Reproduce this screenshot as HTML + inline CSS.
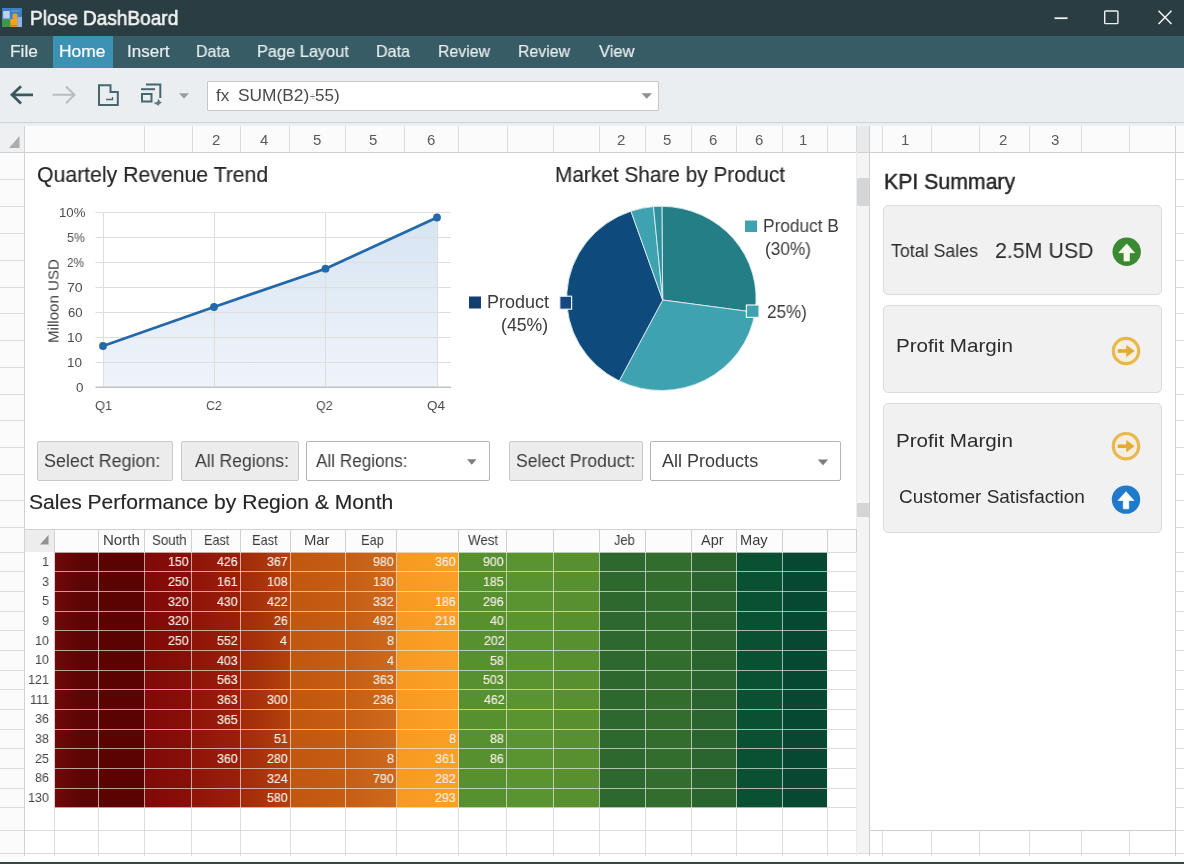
<!DOCTYPE html>
<html><head><meta charset="utf-8"><title>Plose DashBoard</title>
<style>
html,body{margin:0;padding:0;}
body{width:1184px;height:864px;overflow:hidden;background:#fff;position:relative;font-family:"Liberation Sans",sans-serif;}
.b{position:absolute;display:block;}
.t{will-change:transform;position:absolute;white-space:nowrap;transform-origin:0 0;}
</style></head><body>
<div class="b" style="left:0px;top:126px;width:24.5px;height:738px;background:#fbfbfb;"></div>
<div class="b" style="left:0px;top:123.5px;width:1184px;height:2.5px;background:#eef0f2;"></div>
<div class="b" style="left:0px;top:126px;width:1184px;height:26px;background:#fbfbfb;"></div>
<div class="b" style="left:0px;top:126px;width:24.5px;height:26px;background:#eef0f1;"></div>
<div class="b" style="left:0px;top:151.9px;width:24.5px;height:1.2px;background:#dadcde;"></div>
<div class="b" style="left:1175px;top:151.9px;width:9px;height:1.2px;background:#dadcde;"></div>
<div class="b" style="left:0px;top:178.9px;width:24.5px;height:1.2px;background:#dadcde;"></div>
<div class="b" style="left:1175px;top:178.9px;width:9px;height:1.2px;background:#dadcde;"></div>
<div class="b" style="left:0px;top:205.9px;width:24.5px;height:1.2px;background:#dadcde;"></div>
<div class="b" style="left:1175px;top:205.9px;width:9px;height:1.2px;background:#dadcde;"></div>
<div class="b" style="left:0px;top:232.9px;width:24.5px;height:1.2px;background:#dadcde;"></div>
<div class="b" style="left:1175px;top:232.9px;width:9px;height:1.2px;background:#dadcde;"></div>
<div class="b" style="left:0px;top:259.9px;width:24.5px;height:1.2px;background:#dadcde;"></div>
<div class="b" style="left:1175px;top:259.9px;width:9px;height:1.2px;background:#dadcde;"></div>
<div class="b" style="left:0px;top:286.9px;width:24.5px;height:1.2px;background:#dadcde;"></div>
<div class="b" style="left:1175px;top:286.9px;width:9px;height:1.2px;background:#dadcde;"></div>
<div class="b" style="left:0px;top:312.9px;width:24.5px;height:1.2px;background:#dadcde;"></div>
<div class="b" style="left:1175px;top:312.9px;width:9px;height:1.2px;background:#dadcde;"></div>
<div class="b" style="left:0px;top:339.9px;width:24.5px;height:1.2px;background:#dadcde;"></div>
<div class="b" style="left:1175px;top:339.9px;width:9px;height:1.2px;background:#dadcde;"></div>
<div class="b" style="left:0px;top:366.9px;width:24.5px;height:1.2px;background:#dadcde;"></div>
<div class="b" style="left:1175px;top:366.9px;width:9px;height:1.2px;background:#dadcde;"></div>
<div class="b" style="left:0px;top:393.9px;width:24.5px;height:1.2px;background:#dadcde;"></div>
<div class="b" style="left:1175px;top:393.9px;width:9px;height:1.2px;background:#dadcde;"></div>
<div class="b" style="left:0px;top:419.9px;width:24.5px;height:1.2px;background:#dadcde;"></div>
<div class="b" style="left:1175px;top:419.9px;width:9px;height:1.2px;background:#dadcde;"></div>
<div class="b" style="left:0px;top:446.9px;width:24.5px;height:1.2px;background:#dadcde;"></div>
<div class="b" style="left:1175px;top:446.9px;width:9px;height:1.2px;background:#dadcde;"></div>
<div class="b" style="left:0px;top:473.9px;width:24.5px;height:1.2px;background:#dadcde;"></div>
<div class="b" style="left:1175px;top:473.9px;width:9px;height:1.2px;background:#dadcde;"></div>
<div class="b" style="left:0px;top:499.9px;width:24.5px;height:1.2px;background:#dadcde;"></div>
<div class="b" style="left:1175px;top:499.9px;width:9px;height:1.2px;background:#dadcde;"></div>
<div class="b" style="left:0px;top:526.9px;width:24.5px;height:1.2px;background:#dadcde;"></div>
<div class="b" style="left:1175px;top:526.9px;width:9px;height:1.2px;background:#dadcde;"></div>
<div class="b" style="left:0px;top:551.9px;width:24.5px;height:1.2px;background:#dadcde;"></div>
<div class="b" style="left:1175px;top:551.9px;width:9px;height:1.2px;background:#dadcde;"></div>
<div class="b" style="left:0px;top:570.9px;width:24.5px;height:1.2px;background:#dadcde;"></div>
<div class="b" style="left:1175px;top:570.9px;width:9px;height:1.2px;background:#dadcde;"></div>
<div class="b" style="left:0px;top:590.9px;width:24.5px;height:1.2px;background:#dadcde;"></div>
<div class="b" style="left:1175px;top:590.9px;width:9px;height:1.2px;background:#dadcde;"></div>
<div class="b" style="left:0px;top:610.9px;width:24.5px;height:1.2px;background:#dadcde;"></div>
<div class="b" style="left:1175px;top:610.9px;width:9px;height:1.2px;background:#dadcde;"></div>
<div class="b" style="left:0px;top:629.9px;width:24.5px;height:1.2px;background:#dadcde;"></div>
<div class="b" style="left:1175px;top:629.9px;width:9px;height:1.2px;background:#dadcde;"></div>
<div class="b" style="left:0px;top:649.9px;width:24.5px;height:1.2px;background:#dadcde;"></div>
<div class="b" style="left:1175px;top:649.9px;width:9px;height:1.2px;background:#dadcde;"></div>
<div class="b" style="left:0px;top:669.9px;width:24.5px;height:1.2px;background:#dadcde;"></div>
<div class="b" style="left:1175px;top:669.9px;width:9px;height:1.2px;background:#dadcde;"></div>
<div class="b" style="left:0px;top:688.9px;width:24.5px;height:1.2px;background:#dadcde;"></div>
<div class="b" style="left:1175px;top:688.9px;width:9px;height:1.2px;background:#dadcde;"></div>
<div class="b" style="left:0px;top:708.9px;width:24.5px;height:1.2px;background:#dadcde;"></div>
<div class="b" style="left:1175px;top:708.9px;width:9px;height:1.2px;background:#dadcde;"></div>
<div class="b" style="left:0px;top:728.9px;width:24.5px;height:1.2px;background:#dadcde;"></div>
<div class="b" style="left:1175px;top:728.9px;width:9px;height:1.2px;background:#dadcde;"></div>
<div class="b" style="left:0px;top:747.9px;width:24.5px;height:1.2px;background:#dadcde;"></div>
<div class="b" style="left:1175px;top:747.9px;width:9px;height:1.2px;background:#dadcde;"></div>
<div class="b" style="left:0px;top:767.9px;width:24.5px;height:1.2px;background:#dadcde;"></div>
<div class="b" style="left:1175px;top:767.9px;width:9px;height:1.2px;background:#dadcde;"></div>
<div class="b" style="left:0px;top:787.9px;width:24.5px;height:1.2px;background:#dadcde;"></div>
<div class="b" style="left:1175px;top:787.9px;width:9px;height:1.2px;background:#dadcde;"></div>
<div class="b" style="left:0px;top:806.9px;width:24.5px;height:1.2px;background:#dadcde;"></div>
<div class="b" style="left:1175px;top:806.9px;width:9px;height:1.2px;background:#dadcde;"></div>
<div class="b" style="left:0px;top:829.9px;width:24.5px;height:1.2px;background:#dadcde;"></div>
<div class="b" style="left:1175px;top:829.9px;width:9px;height:1.2px;background:#dadcde;"></div>
<div class="b" style="left:0px;top:852.9px;width:24.5px;height:1.2px;background:#dadcde;"></div>
<div class="b" style="left:1175px;top:852.9px;width:9px;height:1.2px;background:#dadcde;"></div>
<div class="b" style="left:0px;top:829.9px;width:1184px;height:1.2px;background:#dadcde;"></div>
<div class="b" style="left:0px;top:852.9px;width:1184px;height:1.2px;background:#dadcde;"></div>
<div class="b" style="left:23.9px;top:126px;width:1.2px;height:26px;background:#dadcde;"></div>
<div class="b" style="left:143.9px;top:126px;width:1.2px;height:26px;background:#dadcde;"></div>
<div class="b" style="left:191.9px;top:126px;width:1.2px;height:26px;background:#dadcde;"></div>
<div class="b" style="left:239.9px;top:126px;width:1.2px;height:26px;background:#dadcde;"></div>
<div class="b" style="left:288.9px;top:126px;width:1.2px;height:26px;background:#dadcde;"></div>
<div class="b" style="left:344.9px;top:126px;width:1.2px;height:26px;background:#dadcde;"></div>
<div class="b" style="left:403.9px;top:126px;width:1.2px;height:26px;background:#dadcde;"></div>
<div class="b" style="left:457.9px;top:126px;width:1.2px;height:26px;background:#dadcde;"></div>
<div class="b" style="left:506.9px;top:126px;width:1.2px;height:26px;background:#dadcde;"></div>
<div class="b" style="left:552.9px;top:126px;width:1.2px;height:26px;background:#dadcde;"></div>
<div class="b" style="left:598.9px;top:126px;width:1.2px;height:26px;background:#dadcde;"></div>
<div class="b" style="left:644.9px;top:126px;width:1.2px;height:26px;background:#dadcde;"></div>
<div class="b" style="left:690.9px;top:126px;width:1.2px;height:26px;background:#dadcde;"></div>
<div class="b" style="left:735.9px;top:126px;width:1.2px;height:26px;background:#dadcde;"></div>
<div class="b" style="left:781.9px;top:126px;width:1.2px;height:26px;background:#dadcde;"></div>
<div class="b" style="left:826.9px;top:126px;width:1.2px;height:26px;background:#dadcde;"></div>
<div class="b" style="left:855.9px;top:126px;width:1.2px;height:26px;background:#dadcde;"></div>
<div class="b" style="left:868.9px;top:126px;width:1.2px;height:26px;background:#dadcde;"></div>
<div class="b" style="left:881.9px;top:126px;width:1.2px;height:26px;background:#dadcde;"></div>
<div class="b" style="left:930.9px;top:126px;width:1.2px;height:26px;background:#dadcde;"></div>
<div class="b" style="left:978.9px;top:126px;width:1.2px;height:26px;background:#dadcde;"></div>
<div class="b" style="left:1028.9px;top:126px;width:1.2px;height:26px;background:#dadcde;"></div>
<div class="b" style="left:1080.9px;top:126px;width:1.2px;height:26px;background:#dadcde;"></div>
<div class="b" style="left:1128.9px;top:126px;width:1.2px;height:26px;background:#dadcde;"></div>
<div class="b" style="left:1174.9px;top:126px;width:1.2px;height:26px;background:#dadcde;"></div>
<div class="b" style="left:53.9px;top:808px;width:1.2px;height:48px;background:#dadcde;"></div>
<div class="b" style="left:97.9px;top:808px;width:1.2px;height:48px;background:#dadcde;"></div>
<div class="b" style="left:143.9px;top:808px;width:1.2px;height:48px;background:#dadcde;"></div>
<div class="b" style="left:190.9px;top:808px;width:1.2px;height:48px;background:#dadcde;"></div>
<div class="b" style="left:239.9px;top:808px;width:1.2px;height:48px;background:#dadcde;"></div>
<div class="b" style="left:289.9px;top:808px;width:1.2px;height:48px;background:#dadcde;"></div>
<div class="b" style="left:344.9px;top:808px;width:1.2px;height:48px;background:#dadcde;"></div>
<div class="b" style="left:395.9px;top:808px;width:1.2px;height:48px;background:#dadcde;"></div>
<div class="b" style="left:457.9px;top:808px;width:1.2px;height:48px;background:#dadcde;"></div>
<div class="b" style="left:505.9px;top:808px;width:1.2px;height:48px;background:#dadcde;"></div>
<div class="b" style="left:552.9px;top:808px;width:1.2px;height:48px;background:#dadcde;"></div>
<div class="b" style="left:598.9px;top:808px;width:1.2px;height:48px;background:#dadcde;"></div>
<div class="b" style="left:644.9px;top:808px;width:1.2px;height:48px;background:#dadcde;"></div>
<div class="b" style="left:690.9px;top:808px;width:1.2px;height:48px;background:#dadcde;"></div>
<div class="b" style="left:735.9px;top:808px;width:1.2px;height:48px;background:#dadcde;"></div>
<div class="b" style="left:781.9px;top:808px;width:1.2px;height:48px;background:#dadcde;"></div>
<div class="b" style="left:826.9px;top:808px;width:1.2px;height:48px;background:#dadcde;"></div>
<div class="b" style="left:855.9px;top:808px;width:1.2px;height:48px;background:#dadcde;"></div>
<div class="b" style="left:868.9px;top:808px;width:1.2px;height:48px;background:#dadcde;"></div>
<div class="b" style="left:881.9px;top:808px;width:1.2px;height:48px;background:#dadcde;"></div>
<div class="b" style="left:930.9px;top:808px;width:1.2px;height:48px;background:#dadcde;"></div>
<div class="b" style="left:978.9px;top:808px;width:1.2px;height:48px;background:#dadcde;"></div>
<div class="b" style="left:1028.9px;top:808px;width:1.2px;height:48px;background:#dadcde;"></div>
<div class="b" style="left:1080.9px;top:808px;width:1.2px;height:48px;background:#dadcde;"></div>
<div class="b" style="left:1128.9px;top:808px;width:1.2px;height:48px;background:#dadcde;"></div>
<div class="b" style="left:1174.9px;top:808px;width:1.2px;height:48px;background:#dadcde;"></div>
<div class="b" style="left:24.5px;top:152px;width:831.5px;height:656px;background:#fff;"></div>
<div class="b" style="left:869.5px;top:152px;width:305.5px;height:678.5px;background:#fff;"></div>
<div class="b" style="left:0px;top:151.8px;width:1184px;height:1.4px;background:#d0d0d0;"></div>
<div class="b" style="left:23.8px;top:126px;width:1.4px;height:730px;background:#d2d2d2;"></div>
<div class="b" style="left:1174.8px;top:126px;width:1.4px;height:730px;background:#d2d2d2;"></div>
<div class="b" style="left:856px;top:126px;width:13.5px;height:26px;background:#e8e9ea;"></div>
<div class="b" style="left:856px;top:152.7px;width:13.5px;height:700px;background:#f4f4f4;"></div>
<div class="b" style="left:855.9px;top:126px;width:1.2px;height:26px;background:#d9dbdd;"></div>
<div class="b" style="left:856.0px;top:152px;width:1px;height:704px;background:#ececec;"></div>
<div class="b" style="left:868.8px;top:126px;width:1.4px;height:730px;background:#cfcfcf;"></div>
<div class="b" style="left:857px;top:178px;width:12px;height:27.5px;background:#d3d5d7;"></div>
<div class="b" style="left:857px;top:502.5px;width:12px;height:14px;background:#d3d5d7;"></div>
<div class="b" style="left:869.5px;top:829.8px;width:305.5px;height:1.4px;background:#cfcfcf;"></div>
<div class="b" style="left:0px;top:0px;width:1184px;height:36px;background:#293d42;"></div>
<svg class="b" style="left:2px;top:7.5px" width="20" height="19.5" viewBox="0 0 20 19.5">
<rect x="0" y="0" width="20" height="19.5" rx="1.5" fill="#6f9fd2"/>
<rect x="0" y="0" width="20" height="11.5" fill="#3f7fc4"/>
<rect x="0" y="11.5" width="8.5" height="8" fill="#3b9848"/>
<rect x="8.5" y="11" width="7" height="8" fill="#f3a21c"/>
<rect x="10.5" y="5.5" width="5" height="6.5" rx="2" fill="#f0a020"/>
<rect x="15.5" y="9" width="4.5" height="10.5" fill="#8db4e2"/>
<rect x="1.2" y="3" width="6.5" height="7.5" fill="#d5e2f2" opacity=".85"/>
<rect x="9" y="17" width="6" height="1.5" fill="#e96a3a"/>
<rect x="9.5" y="2" width="8" height="2" fill="#5a92d0"/>
</svg>
<span class="t" style="left:29.98px;top:6px;font-size:20.5px;line-height:23px;color:#f3f3f3;transform:scaleX(0.9290);-webkit-text-stroke:0.6px #f3f3f3;">Plose DashBoard</span>
<svg class="b" style="left:1040px;top:0" width="144" height="36" viewBox="0 0 144 36">
<path d="M14.5 18.2H27.5" stroke="#f0f0f0" stroke-width="1.8" fill="none"/>
<rect x="64.7" y="11" width="13.2" height="12.6" rx="0.8" stroke="#f0f0f0" stroke-width="1.4" fill="none"/>
<path d="M118.5 10.8L131.5 24M131.5 10.8L118.5 24" stroke="#f0f0f0" stroke-width="1.6" fill="none"/>
</svg>
<div class="b" style="left:0px;top:36px;width:1184px;height:32px;background:#385c65;"></div>
<div class="b" style="left:52.5px;top:36px;width:60.5px;height:32px;background:#3d92b4;"></div>
<span class="t" style="left:9.87px;top:42px;font-size:17px;line-height:19px;color:#e6eef0;transform:scaleX(1.0166);-webkit-text-stroke:0.2px #e6eef0;">File</span>
<span class="t" style="left:59.36px;top:42px;font-size:17px;line-height:19px;color:#fff;transform:scaleX(1.0228);-webkit-text-stroke:0.2px #fff;">Home</span>
<span class="t" style="left:127.49px;top:42px;font-size:17px;line-height:19px;color:#e6eef0;transform:scaleX(0.9885);-webkit-text-stroke:0.2px #e6eef0;">Insert</span>
<span class="t" style="left:196.22px;top:42px;font-size:17px;line-height:19px;color:#e6eef0;transform:scaleX(0.9394);-webkit-text-stroke:0.2px #e6eef0;">Data</span>
<span class="t" style="left:257.44px;top:42px;font-size:17px;line-height:19px;color:#e6eef0;transform:scaleX(0.9618);-webkit-text-stroke:0.2px #e6eef0;">Page Layout</span>
<span class="t" style="left:376.46px;top:42px;font-size:17px;line-height:19px;color:#e6eef0;transform:scaleX(0.9467);-webkit-text-stroke:0.2px #e6eef0;">Data</span>
<span class="t" style="left:438.48px;top:42px;font-size:17px;line-height:19px;color:#e6eef0;transform:scaleX(0.9329);-webkit-text-stroke:0.2px #e6eef0;">Review</span>
<span class="t" style="left:518.48px;top:42px;font-size:17px;line-height:19px;color:#e6eef0;transform:scaleX(0.9329);-webkit-text-stroke:0.2px #e6eef0;">Review</span>
<span class="t" style="left:599.00px;top:42px;font-size:17px;line-height:19px;color:#e6eef0;transform:scaleX(0.9713);-webkit-text-stroke:0.2px #e6eef0;">View</span>
<div class="b" style="left:0px;top:68px;width:1184px;height:55.5px;background:#ebeef1;"></div>
<div class="b" style="left:0px;top:121.7px;width:1184px;height:1.6px;background:#cdd2d6;"></div>
<div class="b" style="left:207px;top:80.5px;width:452px;height:30px;background:#fff;border:1px solid #c3c7ca;box-sizing:border-box;border-radius:1px;"></div>
<span class="t" style="left:216.33px;top:86px;font-size:17px;line-height:19px;color:#4a4a4a;transform:scaleX(1.0062);">fx</span>
<span class="t" style="left:237.72px;top:86px;font-size:17px;line-height:19px;color:#4a4a4a;transform:scaleX(1.0195);">SUM(B2)</span>
<span class="t" style="left:309.72px;top:90px;font-size:11px;line-height:12px;color:#777;transform:scaleX(0.8349);">÷</span>
<span class="t" style="left:314.82px;top:86px;font-size:17px;line-height:19px;color:#4a4a4a;transform:scaleX(1.0059);">55)</span>
<svg class="b" style="left:0;top:68px" width="700" height="55" viewBox="0 68 700 55">
<path d="M33 94.8H12M21 86.2L12 94.8L21 103.4" stroke="#3b5a60" stroke-width="2.8" fill="none" stroke-linecap="butt" stroke-linejoin="miter"/>
<path d="M52.5 94.8H74M66 86.5L74.5 94.8L66 103.2" stroke="#b9bdc1" stroke-width="2" fill="none"/>
<path d="M99 85.3H110.5V92H117.8V105H99Z" stroke="#47666e" stroke-width="2" fill="none" stroke-linejoin="miter"/>
<path d="M106 99.5H112.5V97" stroke="#47666e" stroke-width="1.3" fill="none"/>
<path d="M146 84.5H160.3V98" stroke="#47666e" stroke-width="2" fill="none"/>
<path d="M141 89.2H155" stroke="#47666e" stroke-width="2" fill="none"/>
<rect x="142" y="94" width="9.5" height="7.5" stroke="#47666e" stroke-width="2" fill="none"/>
<path d="M153.5 103L157 102L158.5 98.8L160 101.5L162 102.5L159.5 104L158.5 105.8L156.5 104.5Z" fill="#5d7a82"/>
<path d="M179 93.2H189L184 98.8Z" fill="#9a9ea2"/>
<path d="M641.5 93.2H652L646.7 98.8Z" fill="#8d9194"/>
</svg>
<svg class="b" style="left:9px;top:135.5px" width="11" height="12.5" viewBox="0 0 11 12.5"><path d="M10.5 0V12H0Z" fill="#a9adb0"/></svg>
<span class="t" style="left:211.50px;top:131px;font-size:15px;line-height:17px;color:#5a5a5a;transform:scaleX(1.0000);">2</span>
<span class="t" style="left:260.18px;top:131px;font-size:15px;line-height:17px;color:#5a5a5a;transform:scaleX(1.0000);">4</span>
<span class="t" style="left:313.14px;top:131px;font-size:15px;line-height:17px;color:#5a5a5a;transform:scaleX(1.0000);">5</span>
<span class="t" style="left:368.84px;top:131px;font-size:15px;line-height:17px;color:#5a5a5a;transform:scaleX(1.0000);">5</span>
<span class="t" style="left:426.56px;top:131px;font-size:15px;line-height:17px;color:#5a5a5a;transform:scaleX(1.0000);">6</span>
<span class="t" style="left:617.30px;top:131px;font-size:15px;line-height:17px;color:#5a5a5a;transform:scaleX(1.0000);">2</span>
<span class="t" style="left:663.34px;top:131px;font-size:15px;line-height:17px;color:#5a5a5a;transform:scaleX(1.0000);">5</span>
<span class="t" style="left:709.26px;top:131px;font-size:15px;line-height:17px;color:#5a5a5a;transform:scaleX(1.0000);">6</span>
<span class="t" style="left:754.76px;top:131px;font-size:15px;line-height:17px;color:#5a5a5a;transform:scaleX(1.0000);">6</span>
<span class="t" style="left:799.11px;top:131px;font-size:15px;line-height:17px;color:#5a5a5a;transform:scaleX(1.0000);">1</span>
<span class="t" style="left:900.91px;top:131px;font-size:15px;line-height:17px;color:#5a5a5a;transform:scaleX(1.0000);">1</span>
<span class="t" style="left:999.30px;top:131px;font-size:15px;line-height:17px;color:#5a5a5a;transform:scaleX(1.0000);">2</span>
<span class="t" style="left:1051.17px;top:131px;font-size:15px;line-height:17px;color:#5a5a5a;transform:scaleX(1.0000);">3</span>
<span class="t" style="left:36.54px;top:163px;font-size:21.5px;line-height:24px;color:#262626;transform:scaleX(0.9871);-webkit-text-stroke:0.15px #262626;">Quartely Revenue Trend</span>
<span class="t" style="left:554.84px;top:163px;font-size:21.5px;line-height:24px;color:#262626;transform:scaleX(0.9679);-webkit-text-stroke:0.15px #262626;">Market Share by Product</span>
<span class="t" style="left:29.05px;top:490px;font-size:20.5px;line-height:23px;color:#262626;transform:scaleX(1.0279);-webkit-text-stroke:0.15px #262626;">Sales Performance by Region &amp; Month</span>
<span class="t" style="left:883.80px;top:169px;font-size:22px;line-height:25px;color:#262626;transform:scaleX(0.9666);-webkit-text-stroke:0.45px #262626;">KPI Summary</span>
<svg class="b" style="left:0;top:152px" width="560" height="290" viewBox="0 152 560 290"><defs><linearGradient id="ag" x1="0" y1="0" x2="0" y2="1"><stop offset="0" stop-color="#cfdff0" stop-opacity=".85"/><stop offset="1" stop-color="#e9f0f8" stop-opacity=".75"/></linearGradient></defs><path d="M103 346L214 307L325.5 268.7L437 217.5V387H103Z" fill="url(#ag)"/><path d="M95.5 212.5H451" stroke="#dedede" stroke-width="1.1"/><path d="M95.5 237.5H451" stroke="#dedede" stroke-width="1.1"/><path d="M95.5 262.5H451" stroke="#dedede" stroke-width="1.1"/><path d="M95.5 287.5H451" stroke="#dedede" stroke-width="1.1"/><path d="M95.5 312.5H451" stroke="#dedede" stroke-width="1.1"/><path d="M95.5 337.5H451" stroke="#dedede" stroke-width="1.1"/><path d="M95.5 362.5H451" stroke="#dedede" stroke-width="1.1"/><path d="M103.5 212V387" stroke="#dedede" stroke-width="1.1"/><path d="M214.5 212V387" stroke="#dedede" stroke-width="1.1"/><path d="M325.5 212V387" stroke="#dedede" stroke-width="1.1"/><path d="M437.5 212V387" stroke="#dedede" stroke-width="1.1"/><path d="M95.5 387.3H451" stroke="#c2c2c2" stroke-width="1.6"/><path d="M103 346L214 307L325.5 268.7L437 217.5" stroke="#2368a8" stroke-width="2.8" fill="none" stroke-linejoin="round"/><circle cx="103" cy="346" r="3.9" fill="#2368a8"/><circle cx="214" cy="307" r="3.9" fill="#2368a8"/><circle cx="325.5" cy="268.7" r="3.9" fill="#2368a8"/><circle cx="437" cy="217.5" r="3.9" fill="#2368a8"/></svg>
<span class="t" style="left:59.01px;top:205px;font-size:13px;line-height:15px;color:#4d4d4d;transform:scaleX(1.0175);">10%</span>
<span class="t" style="left:67.00px;top:230px;font-size:13px;line-height:15px;color:#4d4d4d;transform:scaleX(0.9545);">5%</span>
<span class="t" style="left:67.41px;top:255px;font-size:13px;line-height:15px;color:#4d4d4d;transform:scaleX(0.9050);">2%</span>
<span class="t" style="left:67.29px;top:280px;font-size:13px;line-height:15px;color:#4d4d4d;transform:scaleX(1.0882);">70</span>
<span class="t" style="left:68.04px;top:305px;font-size:13px;line-height:15px;color:#4d4d4d;transform:scaleX(1.0131);">60</span>
<span class="t" style="left:67.17px;top:330px;font-size:13px;line-height:15px;color:#4d4d4d;transform:scaleX(1.0615);">10</span>
<span class="t" style="left:67.49px;top:355px;font-size:13px;line-height:15px;color:#4d4d4d;transform:scaleX(1.0385);">10</span>
<span class="t" style="left:75.53px;top:380px;font-size:13px;line-height:15px;color:#4d4d4d;transform:scaleX(1.0309);">0</span>
<span class="t" style="left:95.42px;top:398px;font-size:13.5px;line-height:15px;color:#4d4d4d;transform:scaleX(0.9520);">Q1</span>
<span class="t" style="left:206.39px;top:398px;font-size:13.5px;line-height:15px;color:#4d4d4d;transform:scaleX(0.9102);">C2</span>
<span class="t" style="left:315.94px;top:398px;font-size:13.5px;line-height:15px;color:#4d4d4d;transform:scaleX(0.9222);">Q2</span>
<span class="t" style="left:426.90px;top:398px;font-size:13.5px;line-height:15px;color:#4d4d4d;transform:scaleX(0.9955);">Q4</span>
<span class="t" style="left:0;top:0;font-size:15px;line-height:17px;color:#3f3f3f;transform-origin:0 0;transform:translate(44.5px,343px) rotate(-90deg) scaleX(1.0068);">Milloon USD</span>
<svg class="b" style="left:540px;top:190px" width="320" height="220" viewBox="540 190 320 220"><path d="M662.7 300.0L661.90 206.30A94.7 92.1 0 0 1 755.01 312.30Z" fill="#237e86" stroke="#dcebef" stroke-width="0.9" stroke-linejoin="round"/><path d="M662.7 300.0L755.01 312.30A94.7 92.1 0 0 1 619.26 380.88Z" fill="#3ea2b0" stroke="#dcebef" stroke-width="0.9" stroke-linejoin="round"/><path d="M662.7 300.0L619.26 380.88A94.7 92.1 0 0 1 630.96 211.19Z" fill="#0e4a7c" stroke="#dcebef" stroke-width="0.9" stroke-linejoin="round"/><path d="M662.7 300.0L630.96 211.19A94.7 92.1 0 0 1 653.48 206.62Z" fill="#3ea2b0" stroke="#dcebef" stroke-width="0.9" stroke-linejoin="round"/><path d="M662.7 300.0L653.48 206.62A94.7 92.1 0 0 1 661.90 206.30Z" fill="#2f919d" stroke="#dcebef" stroke-width="0.9" stroke-linejoin="round"/><rect x="469" y="296.5" width="12" height="12" fill="#123f70"/><rect x="559.8" y="296.2" width="11.8" height="13" fill="#14487e" stroke="#eef3f7" stroke-width="1.2"/><rect x="745" y="220.5" width="12" height="11.5" fill="#3ea2b0"/><rect x="746.4" y="305" width="12.6" height="12.4" fill="#3ea2b0" stroke="#eef5f7" stroke-width="1.2"/></svg>
<svg class="b" style="left:465px;top:292px" width="20" height="20" viewBox="465 292 20 20"><rect x="469" y="296.5" width="12" height="12" fill="#123f70"/></svg>
<span class="t" style="left:487.06px;top:292px;font-size:17.5px;line-height:20px;color:#3a3a3a;transform:scaleX(1.0274);">Product</span>
<span class="t" style="left:500.94px;top:315px;font-size:17.5px;line-height:20px;color:#3a3a3a;transform:scaleX(1.0084);">(45%)</span>
<span class="t" style="left:763.12px;top:216px;font-size:17.5px;line-height:20px;color:#3a3a3a;transform:scaleX(0.9859);">Product B</span>
<span class="t" style="left:764.96px;top:239px;font-size:17.5px;line-height:20px;color:#3a3a3a;transform:scaleX(0.9860);">(30%)</span>
<span class="t" style="left:767.15px;top:302px;font-size:17.5px;line-height:20px;color:#3a3a3a;transform:scaleX(0.9759);">25%)</span>
<div class="b" style="left:37px;top:441px;width:135.5px;height:40px;background:#ececec;border:1px solid #c9c9c9;box-sizing:border-box;border-radius:2px;"></div>
<div class="b" style="left:181px;top:441px;width:117.5px;height:40px;background:#ececec;border:1px solid #c9c9c9;box-sizing:border-box;border-radius:2px;"></div>
<div class="b" style="left:306px;top:441px;width:184px;height:40px;background:#fff;border:1px solid #b5b5b5;box-sizing:border-box;border-radius:2px;"></div>
<div class="b" style="left:509px;top:441px;width:134px;height:40px;background:#ececec;border:1px solid #c9c9c9;box-sizing:border-box;border-radius:2px;"></div>
<div class="b" style="left:650px;top:441px;width:191px;height:40px;background:#fff;border:1px solid #b5b5b5;box-sizing:border-box;border-radius:2px;"></div>
<span class="t" style="left:44.19px;top:451px;font-size:18px;line-height:20px;color:#3c3c3c;transform:scaleX(0.9942);">Select Region:</span>
<span class="t" style="left:194.50px;top:451px;font-size:18px;line-height:20px;color:#3c3c3c;transform:scaleX(0.9788);">All Regions:</span>
<span class="t" style="left:316.00px;top:451px;font-size:18px;line-height:20px;color:#3c3c3c;transform:scaleX(0.9524);">All Regions:</span>
<span class="t" style="left:516.21px;top:451px;font-size:18px;line-height:20px;color:#3c3c3c;transform:scaleX(0.9774);">Select Product:</span>
<span class="t" style="left:662.00px;top:451px;font-size:18px;line-height:20px;color:#3c3c3c;transform:scaleX(1.0010);">All Products</span>
<svg class="b" style="left:460px;top:455px" width="380" height="14" viewBox="460 455 380 14"><path d="M467 459.3H476.6L471.8 464.8Z" fill="#7d7d7d"/><path d="M817.7 459.6H828.2L823 465.2Z" fill="#7d7d7d"/></svg>
<div class="b" style="left:24.5px;top:529px;width:831.5px;height:23px;background:#fcfcfc;"></div>
<div class="b" style="left:24.5px;top:529px;width:30px;height:23px;background:#ededed;"></div>
<div class="b" style="left:24.5px;top:528.85px;width:831.5px;height:1.3px;background:#d2d2d2;"></div>
<div class="b" style="left:53.85px;top:529px;width:1.3px;height:23px;background:#d2d2d2;"></div>
<div class="b" style="left:97.85px;top:529px;width:1.3px;height:23px;background:#d2d2d2;"></div>
<div class="b" style="left:143.85px;top:529px;width:1.3px;height:23px;background:#d2d2d2;"></div>
<div class="b" style="left:190.85px;top:529px;width:1.3px;height:23px;background:#d2d2d2;"></div>
<div class="b" style="left:239.85px;top:529px;width:1.3px;height:23px;background:#d2d2d2;"></div>
<div class="b" style="left:289.85px;top:529px;width:1.3px;height:23px;background:#d2d2d2;"></div>
<div class="b" style="left:344.85px;top:529px;width:1.3px;height:23px;background:#d2d2d2;"></div>
<div class="b" style="left:395.85px;top:529px;width:1.3px;height:23px;background:#d2d2d2;"></div>
<div class="b" style="left:457.85px;top:529px;width:1.3px;height:23px;background:#d2d2d2;"></div>
<div class="b" style="left:505.85px;top:529px;width:1.3px;height:23px;background:#d2d2d2;"></div>
<div class="b" style="left:552.85px;top:529px;width:1.3px;height:23px;background:#d2d2d2;"></div>
<div class="b" style="left:598.85px;top:529px;width:1.3px;height:23px;background:#d2d2d2;"></div>
<div class="b" style="left:644.85px;top:529px;width:1.3px;height:23px;background:#d2d2d2;"></div>
<div class="b" style="left:690.85px;top:529px;width:1.3px;height:23px;background:#d2d2d2;"></div>
<div class="b" style="left:735.85px;top:529px;width:1.3px;height:23px;background:#d2d2d2;"></div>
<div class="b" style="left:781.85px;top:529px;width:1.3px;height:23px;background:#d2d2d2;"></div>
<div class="b" style="left:826.85px;top:529px;width:1.3px;height:23px;background:#d2d2d2;"></div>
<div class="b" style="left:855.85px;top:529px;width:1.3px;height:23px;background:#d2d2d2;"></div>
<svg class="b" style="left:39.5px;top:535px" width="9" height="10" viewBox="0 0 9 10"><path d="M8.5 0V9.5H0Z" fill="#8f9396"/></svg>
<span class="t" style="left:102.80px;top:532px;font-size:14.5px;line-height:16px;color:#3c3c3c;transform:scaleX(1.0382);">North</span>
<span class="t" style="left:152.20px;top:532px;font-size:14.5px;line-height:16px;color:#3c3c3c;transform:scaleX(0.9140);">South</span>
<span class="t" style="left:203.79px;top:532px;font-size:14.5px;line-height:16px;color:#3c3c3c;transform:scaleX(0.8693);">East</span>
<span class="t" style="left:252.48px;top:532px;font-size:14.5px;line-height:16px;color:#3c3c3c;transform:scaleX(0.8800);">East</span>
<span class="t" style="left:303.61px;top:532px;font-size:14.5px;line-height:16px;color:#3c3c3c;transform:scaleX(1.0239);">Mar</span>
<span class="t" style="left:360.67px;top:532px;font-size:14.5px;line-height:16px;color:#3c3c3c;transform:scaleX(0.8849);">Eap</span>
<span class="t" style="left:468.00px;top:532px;font-size:14.5px;line-height:16px;color:#3c3c3c;transform:scaleX(0.9175);">West</span>
<span class="t" style="left:613.81px;top:532px;font-size:14.5px;line-height:16px;color:#3c3c3c;transform:scaleX(0.8870);">Jeb</span>
<span class="t" style="left:701.00px;top:532px;font-size:14.5px;line-height:16px;color:#3c3c3c;transform:scaleX(0.9820);">Apr</span>
<span class="t" style="left:740.33px;top:532px;font-size:14.5px;line-height:16px;color:#3c3c3c;transform:scaleX(1.0097);">May</span>
<div class="b" style="left:54.5px;top:552.0px;width:44.25px;height:255.70000000000005px;background:linear-gradient(90deg,#700909,#5d0404 60%);"></div>
<div class="b" style="left:98.75px;top:552.0px;width:45.75px;height:255.70000000000005px;background:#5b0303;"></div>
<div class="b" style="left:144.5px;top:552.0px;width:47.25px;height:255.70000000000005px;background:linear-gradient(90deg,#800a08,#8a0f08);"></div>
<div class="b" style="left:191.75px;top:552.0px;width:48.25px;height:255.70000000000005px;background:linear-gradient(90deg,#8f1409,#9b200a);"></div>
<div class="b" style="left:240px;top:552.0px;width:50px;height:255.70000000000005px;background:linear-gradient(90deg,#a1290a,#b3410d);"></div>
<div class="b" style="left:290px;top:552.0px;width:55.5px;height:255.70000000000005px;background:linear-gradient(90deg,#c1570f,#c55d13);"></div>
<div class="b" style="left:345.5px;top:552.0px;width:51.0px;height:255.70000000000005px;background:linear-gradient(90deg,#c55e15,#cd691c);"></div>
<div class="b" style="left:396.5px;top:552.0px;width:62.0px;height:255.70000000000005px;background:linear-gradient(90deg,#f79a21,#fba026);"></div>
<div class="b" style="left:458.5px;top:552.0px;width:48.25px;height:255.70000000000005px;background:#57912f;"></div>
<div class="b" style="left:506.75px;top:552.0px;width:46.75px;height:255.70000000000005px;background:#5a9430;"></div>
<div class="b" style="left:553.5px;top:552.0px;width:45.5px;height:255.70000000000005px;background:#58902f;"></div>
<div class="b" style="left:599px;top:552.0px;width:46px;height:255.70000000000005px;background:#2d682e;"></div>
<div class="b" style="left:645px;top:552.0px;width:46.25px;height:255.70000000000005px;background:#326d2d;"></div>
<div class="b" style="left:691.25px;top:552.0px;width:45.25px;height:255.70000000000005px;background:#2a6530;"></div>
<div class="b" style="left:736.5px;top:552.0px;width:45.5px;height:255.70000000000005px;background:#0a5033;"></div>
<div class="b" style="left:782px;top:552.0px;width:45px;height:255.70000000000005px;background:#064832;"></div>
<div class="b" style="left:53.8px;top:552.0px;width:1.4px;height:255.70000000000005px;background:rgba(236,236,232,.68);"></div>
<div class="b" style="left:97.8px;top:552.0px;width:1.4px;height:255.70000000000005px;background:rgba(236,236,232,.68);"></div>
<div class="b" style="left:143.8px;top:552.0px;width:1.4px;height:255.70000000000005px;background:rgba(236,236,232,.68);"></div>
<div class="b" style="left:190.8px;top:552.0px;width:1.4px;height:255.70000000000005px;background:rgba(236,236,232,.68);"></div>
<div class="b" style="left:239.8px;top:552.0px;width:1.4px;height:255.70000000000005px;background:rgba(236,236,232,.68);"></div>
<div class="b" style="left:289.8px;top:552.0px;width:1.4px;height:255.70000000000005px;background:rgba(236,236,232,.68);"></div>
<div class="b" style="left:344.8px;top:552.0px;width:1.4px;height:255.70000000000005px;background:rgba(236,236,232,.68);"></div>
<div class="b" style="left:395.8px;top:552.0px;width:1.4px;height:255.70000000000005px;background:rgba(236,236,232,.68);"></div>
<div class="b" style="left:457.8px;top:552.0px;width:1.4px;height:255.70000000000005px;background:rgba(236,236,232,.68);"></div>
<div class="b" style="left:505.8px;top:552.0px;width:1.4px;height:255.70000000000005px;background:rgba(236,236,232,.68);"></div>
<div class="b" style="left:552.8px;top:552.0px;width:1.4px;height:255.70000000000005px;background:rgba(236,236,232,.68);"></div>
<div class="b" style="left:598.8px;top:552.0px;width:1.4px;height:255.70000000000005px;background:rgba(236,236,232,.68);"></div>
<div class="b" style="left:644.8px;top:552.0px;width:1.4px;height:255.70000000000005px;background:rgba(236,236,232,.68);"></div>
<div class="b" style="left:690.8px;top:552.0px;width:1.4px;height:255.70000000000005px;background:rgba(236,236,232,.68);"></div>
<div class="b" style="left:735.8px;top:552.0px;width:1.4px;height:255.70000000000005px;background:rgba(236,236,232,.68);"></div>
<div class="b" style="left:781.8px;top:552.0px;width:1.4px;height:255.70000000000005px;background:rgba(236,236,232,.68);"></div>
<div class="b" style="left:826.8px;top:552.0px;width:1.4px;height:255.70000000000005px;background:rgba(236,236,232,.68);"></div>
<div class="b" style="left:54.5px;top:551.8px;width:772.5px;height:1.4px;background:rgba(236,236,232,.68);"></div>
<div class="b" style="left:827px;top:551.9px;width:29px;height:1.2px;background:#dadcde;"></div>
<div class="b" style="left:54.5px;top:570.8px;width:772.5px;height:1.4px;background:rgba(236,236,232,.68);"></div>
<div class="b" style="left:827px;top:570.9px;width:29px;height:1.2px;background:#dadcde;"></div>
<div class="b" style="left:54.5px;top:590.8px;width:772.5px;height:1.4px;background:rgba(236,236,232,.68);"></div>
<div class="b" style="left:827px;top:590.9px;width:29px;height:1.2px;background:#dadcde;"></div>
<div class="b" style="left:54.5px;top:610.8px;width:772.5px;height:1.4px;background:rgba(236,236,232,.68);"></div>
<div class="b" style="left:827px;top:610.9px;width:29px;height:1.2px;background:#dadcde;"></div>
<div class="b" style="left:54.5px;top:629.8px;width:772.5px;height:1.4px;background:rgba(236,236,232,.68);"></div>
<div class="b" style="left:827px;top:629.9px;width:29px;height:1.2px;background:#dadcde;"></div>
<div class="b" style="left:54.5px;top:649.8px;width:772.5px;height:1.4px;background:rgba(236,236,232,.68);"></div>
<div class="b" style="left:827px;top:649.9px;width:29px;height:1.2px;background:#dadcde;"></div>
<div class="b" style="left:54.5px;top:669.8px;width:772.5px;height:1.4px;background:rgba(236,236,232,.68);"></div>
<div class="b" style="left:827px;top:669.9px;width:29px;height:1.2px;background:#dadcde;"></div>
<div class="b" style="left:54.5px;top:688.8px;width:772.5px;height:1.4px;background:rgba(236,236,232,.68);"></div>
<div class="b" style="left:827px;top:688.9px;width:29px;height:1.2px;background:#dadcde;"></div>
<div class="b" style="left:54.5px;top:708.8px;width:772.5px;height:1.4px;background:rgba(236,236,232,.68);"></div>
<div class="b" style="left:827px;top:708.9px;width:29px;height:1.2px;background:#dadcde;"></div>
<div class="b" style="left:54.5px;top:728.8px;width:772.5px;height:1.4px;background:rgba(236,236,232,.68);"></div>
<div class="b" style="left:827px;top:728.9px;width:29px;height:1.2px;background:#dadcde;"></div>
<div class="b" style="left:54.5px;top:747.8px;width:772.5px;height:1.4px;background:rgba(236,236,232,.68);"></div>
<div class="b" style="left:827px;top:747.9px;width:29px;height:1.2px;background:#dadcde;"></div>
<div class="b" style="left:54.5px;top:767.8px;width:772.5px;height:1.4px;background:rgba(236,236,232,.68);"></div>
<div class="b" style="left:827px;top:767.9px;width:29px;height:1.2px;background:#dadcde;"></div>
<div class="b" style="left:54.5px;top:787.8px;width:772.5px;height:1.4px;background:rgba(236,236,232,.68);"></div>
<div class="b" style="left:827px;top:787.9px;width:29px;height:1.2px;background:#dadcde;"></div>
<div class="b" style="left:54.5px;top:806.8px;width:772.5px;height:1.4px;background:rgba(236,236,232,.68);"></div>
<div class="b" style="left:827px;top:806.9px;width:29px;height:1.2px;background:#dadcde;"></div>
<div class="b" style="left:53.85px;top:529px;width:1.3px;height:279px;background:#d2d2d2;"></div>
<span class="t" style="left:42.30px;top:554px;font-size:13.5px;line-height:15px;color:#444;transform:scaleX(0.9300);">1</span>
<span class="t" style="left:42.23px;top:574px;font-size:13.5px;line-height:15px;color:#444;transform:scaleX(0.9300);">3</span>
<span class="t" style="left:42.23px;top:593px;font-size:13.5px;line-height:15px;color:#444;transform:scaleX(0.9300);">5</span>
<span class="t" style="left:42.30px;top:613px;font-size:13.5px;line-height:15px;color:#444;transform:scaleX(0.9300);">9</span>
<span class="t" style="left:35.20px;top:633px;font-size:13.5px;line-height:15px;color:#444;transform:scaleX(0.9300);">10</span>
<span class="t" style="left:35.20px;top:652px;font-size:13.5px;line-height:15px;color:#444;transform:scaleX(0.9300);">10</span>
<span class="t" style="left:28.36px;top:672px;font-size:13.5px;line-height:15px;color:#444;transform:scaleX(0.9300);">121</span>
<span class="t" style="left:30.18px;top:692px;font-size:13.5px;line-height:15px;color:#444;transform:scaleX(0.9300);">111</span>
<span class="t" style="left:35.27px;top:711px;font-size:13.5px;line-height:15px;color:#444;transform:scaleX(0.9300);">36</span>
<span class="t" style="left:35.27px;top:731px;font-size:13.5px;line-height:15px;color:#444;transform:scaleX(0.9300);">38</span>
<span class="t" style="left:35.27px;top:751px;font-size:13.5px;line-height:15px;color:#444;transform:scaleX(0.9300);">25</span>
<span class="t" style="left:35.27px;top:770px;font-size:13.5px;line-height:15px;color:#444;transform:scaleX(0.9300);">86</span>
<span class="t" style="left:28.24px;top:790px;font-size:13.5px;line-height:15px;color:#444;transform:scaleX(0.9300);">130</span>
<span class="t" style="left:168.42px;top:554px;font-size:13px;line-height:15px;color:#f3ece2;transform:scaleX(0.9500);-webkit-text-stroke:0.2px #f3ece2;">150</span>
<span class="t" style="left:168.42px;top:574px;font-size:13px;line-height:15px;color:#f3ece2;transform:scaleX(0.9500);-webkit-text-stroke:0.2px #f3ece2;">250</span>
<span class="t" style="left:168.42px;top:594px;font-size:13px;line-height:15px;color:#f3ece2;transform:scaleX(0.9500);-webkit-text-stroke:0.2px #f3ece2;">320</span>
<span class="t" style="left:168.42px;top:613px;font-size:13px;line-height:15px;color:#f3ece2;transform:scaleX(0.9500);-webkit-text-stroke:0.2px #f3ece2;">320</span>
<span class="t" style="left:168.42px;top:633px;font-size:13px;line-height:15px;color:#f3ece2;transform:scaleX(0.9500);-webkit-text-stroke:0.2px #f3ece2;">250</span>
<span class="t" style="left:216.73px;top:554px;font-size:13px;line-height:15px;color:#f3ece2;transform:scaleX(0.9500);-webkit-text-stroke:0.2px #f3ece2;">426</span>
<span class="t" style="left:216.79px;top:574px;font-size:13px;line-height:15px;color:#f3ece2;transform:scaleX(0.9500);-webkit-text-stroke:0.2px #f3ece2;">161</span>
<span class="t" style="left:216.67px;top:594px;font-size:13px;line-height:15px;color:#f3ece2;transform:scaleX(0.9500);-webkit-text-stroke:0.2px #f3ece2;">430</span>
<span class="t" style="left:216.79px;top:633px;font-size:13px;line-height:15px;color:#f3ece2;transform:scaleX(0.9500);-webkit-text-stroke:0.2px #f3ece2;">552</span>
<span class="t" style="left:216.73px;top:653px;font-size:13px;line-height:15px;color:#f3ece2;transform:scaleX(0.9500);-webkit-text-stroke:0.2px #f3ece2;">403</span>
<span class="t" style="left:216.73px;top:672px;font-size:13px;line-height:15px;color:#f3ece2;transform:scaleX(0.9500);-webkit-text-stroke:0.2px #f3ece2;">563</span>
<span class="t" style="left:216.73px;top:692px;font-size:13px;line-height:15px;color:#f3ece2;transform:scaleX(0.9500);-webkit-text-stroke:0.2px #f3ece2;">363</span>
<span class="t" style="left:216.73px;top:712px;font-size:13px;line-height:15px;color:#f3ece2;transform:scaleX(0.9500);-webkit-text-stroke:0.2px #f3ece2;">365</span>
<span class="t" style="left:216.67px;top:751px;font-size:13px;line-height:15px;color:#f3ece2;transform:scaleX(0.9500);-webkit-text-stroke:0.2px #f3ece2;">360</span>
<span class="t" style="left:266.79px;top:554px;font-size:13px;line-height:15px;color:#f3ece2;transform:scaleX(0.9500);-webkit-text-stroke:0.2px #f3ece2;">367</span>
<span class="t" style="left:266.73px;top:574px;font-size:13px;line-height:15px;color:#f3ece2;transform:scaleX(0.9500);-webkit-text-stroke:0.2px #f3ece2;">108</span>
<span class="t" style="left:266.79px;top:594px;font-size:13px;line-height:15px;color:#f3ece2;transform:scaleX(0.9500);-webkit-text-stroke:0.2px #f3ece2;">422</span>
<span class="t" style="left:273.59px;top:613px;font-size:13px;line-height:15px;color:#f3ece2;transform:scaleX(0.9500);-webkit-text-stroke:0.2px #f3ece2;">26</span>
<span class="t" style="left:280.25px;top:633px;font-size:13px;line-height:15px;color:#f3ece2;transform:scaleX(0.9500);-webkit-text-stroke:0.2px #f3ece2;">4</span>
<span class="t" style="left:266.67px;top:692px;font-size:13px;line-height:15px;color:#f3ece2;transform:scaleX(0.9500);-webkit-text-stroke:0.2px #f3ece2;">300</span>
<span class="t" style="left:273.65px;top:731px;font-size:13px;line-height:15px;color:#f3ece2;transform:scaleX(0.9500);-webkit-text-stroke:0.2px #f3ece2;">51</span>
<span class="t" style="left:266.67px;top:751px;font-size:13px;line-height:15px;color:#f3ece2;transform:scaleX(0.9500);-webkit-text-stroke:0.2px #f3ece2;">280</span>
<span class="t" style="left:266.55px;top:771px;font-size:13px;line-height:15px;color:#f3ece2;transform:scaleX(0.9500);-webkit-text-stroke:0.2px #f3ece2;">324</span>
<span class="t" style="left:266.67px;top:790px;font-size:13px;line-height:15px;color:#f3ece2;transform:scaleX(0.9500);-webkit-text-stroke:0.2px #f3ece2;">580</span>
<span class="t" style="left:373.17px;top:554px;font-size:13px;line-height:15px;color:#f3ece2;transform:scaleX(0.9500);-webkit-text-stroke:0.2px #f3ece2;">980</span>
<span class="t" style="left:373.17px;top:574px;font-size:13px;line-height:15px;color:#f3ece2;transform:scaleX(0.9500);-webkit-text-stroke:0.2px #f3ece2;">130</span>
<span class="t" style="left:373.29px;top:594px;font-size:13px;line-height:15px;color:#f3ece2;transform:scaleX(0.9500);-webkit-text-stroke:0.2px #f3ece2;">332</span>
<span class="t" style="left:373.29px;top:613px;font-size:13px;line-height:15px;color:#f3ece2;transform:scaleX(0.9500);-webkit-text-stroke:0.2px #f3ece2;">492</span>
<span class="t" style="left:386.94px;top:633px;font-size:13px;line-height:15px;color:#f3ece2;transform:scaleX(0.9500);-webkit-text-stroke:0.2px #f3ece2;">8</span>
<span class="t" style="left:386.75px;top:653px;font-size:13px;line-height:15px;color:#f3ece2;transform:scaleX(0.9500);-webkit-text-stroke:0.2px #f3ece2;">4</span>
<span class="t" style="left:373.23px;top:672px;font-size:13px;line-height:15px;color:#f3ece2;transform:scaleX(0.9500);-webkit-text-stroke:0.2px #f3ece2;">363</span>
<span class="t" style="left:373.23px;top:692px;font-size:13px;line-height:15px;color:#f3ece2;transform:scaleX(0.9500);-webkit-text-stroke:0.2px #f3ece2;">236</span>
<span class="t" style="left:386.94px;top:751px;font-size:13px;line-height:15px;color:#f3ece2;transform:scaleX(0.9500);-webkit-text-stroke:0.2px #f3ece2;">8</span>
<span class="t" style="left:373.17px;top:771px;font-size:13px;line-height:15px;color:#f3ece2;transform:scaleX(0.9500);-webkit-text-stroke:0.2px #f3ece2;">790</span>
<span class="t" style="left:435.17px;top:554px;font-size:13px;line-height:15px;color:#f3ece2;transform:scaleX(0.9500);-webkit-text-stroke:0.2px #f3ece2;">360</span>
<span class="t" style="left:435.23px;top:594px;font-size:13px;line-height:15px;color:#f3ece2;transform:scaleX(0.9500);-webkit-text-stroke:0.2px #f3ece2;">186</span>
<span class="t" style="left:435.23px;top:613px;font-size:13px;line-height:15px;color:#f3ece2;transform:scaleX(0.9500);-webkit-text-stroke:0.2px #f3ece2;">218</span>
<span class="t" style="left:448.94px;top:731px;font-size:13px;line-height:15px;color:#f3ece2;transform:scaleX(0.9500);-webkit-text-stroke:0.2px #f3ece2;">8</span>
<span class="t" style="left:435.29px;top:751px;font-size:13px;line-height:15px;color:#f3ece2;transform:scaleX(0.9500);-webkit-text-stroke:0.2px #f3ece2;">361</span>
<span class="t" style="left:435.29px;top:771px;font-size:13px;line-height:15px;color:#f3ece2;transform:scaleX(0.9500);-webkit-text-stroke:0.2px #f3ece2;">282</span>
<span class="t" style="left:435.23px;top:790px;font-size:13px;line-height:15px;color:#f3ece2;transform:scaleX(0.9500);-webkit-text-stroke:0.2px #f3ece2;">293</span>
<span class="t" style="left:483.42px;top:554px;font-size:13px;line-height:15px;color:#f3ece2;transform:scaleX(0.9500);-webkit-text-stroke:0.2px #f3ece2;">900</span>
<span class="t" style="left:483.48px;top:574px;font-size:13px;line-height:15px;color:#f3ece2;transform:scaleX(0.9500);-webkit-text-stroke:0.2px #f3ece2;">185</span>
<span class="t" style="left:483.48px;top:594px;font-size:13px;line-height:15px;color:#f3ece2;transform:scaleX(0.9500);-webkit-text-stroke:0.2px #f3ece2;">296</span>
<span class="t" style="left:490.27px;top:613px;font-size:13px;line-height:15px;color:#f3ece2;transform:scaleX(0.9500);-webkit-text-stroke:0.2px #f3ece2;">40</span>
<span class="t" style="left:483.54px;top:633px;font-size:13px;line-height:15px;color:#f3ece2;transform:scaleX(0.9500);-webkit-text-stroke:0.2px #f3ece2;">202</span>
<span class="t" style="left:490.34px;top:653px;font-size:13px;line-height:15px;color:#f3ece2;transform:scaleX(0.9500);-webkit-text-stroke:0.2px #f3ece2;">58</span>
<span class="t" style="left:483.48px;top:672px;font-size:13px;line-height:15px;color:#f3ece2;transform:scaleX(0.9500);-webkit-text-stroke:0.2px #f3ece2;">503</span>
<span class="t" style="left:483.54px;top:692px;font-size:13px;line-height:15px;color:#f3ece2;transform:scaleX(0.9500);-webkit-text-stroke:0.2px #f3ece2;">462</span>
<span class="t" style="left:490.34px;top:731px;font-size:13px;line-height:15px;color:#f3ece2;transform:scaleX(0.9500);-webkit-text-stroke:0.2px #f3ece2;">88</span>
<span class="t" style="left:490.34px;top:751px;font-size:13px;line-height:15px;color:#f3ece2;transform:scaleX(0.9500);-webkit-text-stroke:0.2px #f3ece2;">86</span>
<div class="b" style="left:883px;top:205px;width:279px;height:89.5px;background:#f1f1f1;border:1px solid #d6dce2;box-sizing:border-box;border-radius:5px;"></div>
<div class="b" style="left:883px;top:305px;width:279px;height:88px;background:#f1f1f1;border:1px solid #d6dce2;box-sizing:border-box;border-radius:5px;"></div>
<div class="b" style="left:883px;top:403px;width:279px;height:129.5px;background:#f1f1f1;border:1px solid #d6dce2;box-sizing:border-box;border-radius:5px;"></div>
<span class="t" style="left:890.64px;top:240px;font-size:18.5px;line-height:21px;color:#2c2c2c;transform:scaleX(0.9615);">Total Sales</span>
<span class="t" style="left:994.93px;top:238px;font-size:22px;line-height:25px;color:#2c2c2c;transform:scaleX(0.9715);">2.5M USD</span>
<span class="t" style="left:896.35px;top:335px;font-size:19px;line-height:21px;color:#2c2c2c;transform:scaleX(1.0850);">Profit Margin</span>
<span class="t" style="left:896.35px;top:430px;font-size:19px;line-height:21px;color:#2c2c2c;transform:scaleX(1.0850);">Profit Margin</span>
<span class="t" style="left:899.05px;top:486px;font-size:19px;line-height:21px;color:#2c2c2c;transform:scaleX(0.9987);">Customer Satisfaction</span>
<svg class="b" style="left:1100px;top:230px" width="60" height="290" viewBox="1100 230 60 290"><circle cx="1126.7" cy="251.8" r="14.2" fill="#3a8a34"/><path d="M1126.7 243.9L1134.6000000000001 252.70000000000002H1129.4V261.0H1124.0V252.70000000000002H1118.8Z" fill="#fbfbec" stroke="#fbfbec" stroke-width="0.7" stroke-linejoin="round"/><circle cx="1126" cy="351" r="12.7" fill="#f6eee0" stroke="#e8b84c" stroke-width="3.2"/><path d="M1117.7 349.2H1127.5V352.8H1117.7Z" fill="#e3ab35"/><path d="M1126.6 345.4L1134.2 351L1126.6 356.6Z" fill="#e3ab35" stroke="#e3ab35" stroke-width="0.6" stroke-linejoin="round"/><circle cx="1126" cy="446.2" r="12.7" fill="#f6eee0" stroke="#e8b84c" stroke-width="3.2"/><path d="M1117.7 444.4H1127.5V448.0H1117.7Z" fill="#e3ab35"/><path d="M1126.6 440.59999999999997L1134.2 446.2L1126.6 451.8Z" fill="#e3ab35" stroke="#e3ab35" stroke-width="0.6" stroke-linejoin="round"/><circle cx="1126" cy="499.6" r="14.2" fill="#1f7ac9"/><path d="M1126 491.70000000000005L1133.9 500.5H1128.7V508.8H1123.3V500.5H1118.1Z" fill="#ffffff" stroke="#ffffff" stroke-width="0.7" stroke-linejoin="round"/></svg>
<div class="b" style="left:0px;top:862px;width:1184px;height:2px;background:#3d4245;"></div>
<div class="b" style="left:0px;top:856px;width:1184px;height:6px;background:linear-gradient(180deg,rgba(255,255,255,.0),rgba(255,255,255,.7));"></div>
</body></html>
